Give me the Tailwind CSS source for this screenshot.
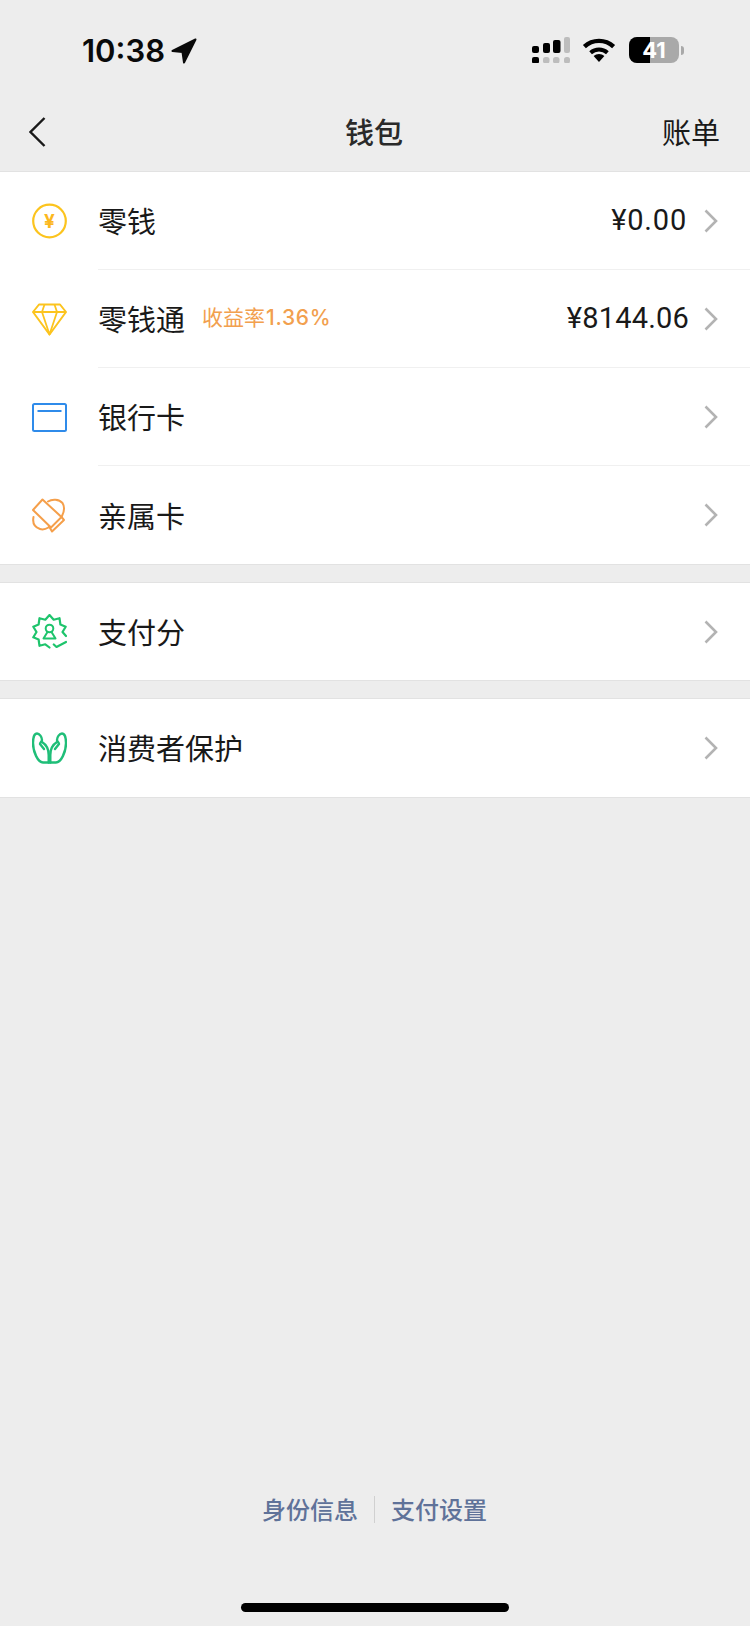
<!DOCTYPE html>
<html lang="zh-CN">
  <head>
    <meta charset="UTF-8" />
    <meta name="viewport" content="width=device-width, initial-scale=1.0" />
    <script src="https://cdn.jsdelivr.net/npm/@tailwindcss/browser@4"></script>
    <title>钱包</title>
  </head>
  <body class="bg-[#ededed] font-['Noto_Sans_CJK_SC',sans-serif] text-[#191919]">
    <div class="flex flex-col h-[1626px] w-[750px] overflow-hidden">
      <!-- Status bar -->
      <div class="flex items-start justify-between h-[90px] pt-[37px] pl-[82px] pr-[66px] shrink-0">
        <div class="flex items-center gap-[6px] h-[26px]">
          <span class="font-['Inter',sans-serif] font-semibold text-[31px] leading-none text-[#0a0a0a]">10:38</span>
          <svg width="26" height="26" viewBox="0 0 26 26" class="mt-[2px]"><path d="M24.500 1.500 1.500 13l10 1L13 24.500z" fill="#0a0a0a" stroke="#0a0a0a" stroke-width="2" stroke-linejoin="round"/></svg>
        </div>
        <div class="flex items-center">
          <svg width="38" height="26" viewBox="0 0 38 26" class="mr-[12px]">
            <rect x="0" y="9" width="7" height="7" rx="2" fill="#000"/>
            <rect x="11" y="6" width="7" height="10" rx="2" fill="#000"/>
            <rect x="21" y="3" width="7.500" height="13" rx="2" fill="#000"/>
            <rect x="32" y="0" width="6" height="16" rx="2" fill="#bdbdbd"/>
            <rect x="0" y="20" width="7" height="6.500" rx="2" fill="#000"/>
            <rect x="11" y="20" width="6.500" height="6.500" rx="2.500" fill="#bdbdbd"/>
            <rect x="21" y="20" width="6.500" height="6.500" rx="2.500" fill="#bdbdbd"/>
            <rect x="32" y="20" width="6" height="6.500" rx="2.500" fill="#bdbdbd"/>
          </svg>
          <svg width="34" height="24" viewBox="0 0 34 24" class="mr-[13px]">
            <path d="M17 24 11.600 18a8 8 0 0 1 10.800 0z" fill="#000"/>
            <path d="M8.600 14.800a12.600 12.600 0 0 1 16.800 0" fill="none" stroke="#000" stroke-width="4"/>
            <path d="M2.400 8.600a21.400 21.400 0 0 1 29.200 0" fill="none" stroke="#000" stroke-width="4.400"/>
          </svg>
          <div class="relative flex w-[50px] h-[26px] rounded-[8px] overflow-hidden bg-[#a9a9a9]">
            <div class="w-[21px] h-full bg-black"></div>
            <span class="absolute inset-0 flex items-center justify-center font-['Inter',sans-serif] font-bold text-[22px] leading-none text-white">41</span>
          </div>
          <div class="w-[3px] h-[9px] ml-[2px] rounded-r-full bg-[#a9a9a9]"></div>
        </div>
      </div>

      <!-- Nav -->
      <div class="relative flex items-center justify-between h-[81px] pt-[2px] pl-[29px] pr-[30px] shrink-0">
        <svg width="17" height="30" viewBox="0 0 17 30"><path d="M15.500 1 1.500 15l14 14" fill="none" stroke="#191919" stroke-width="2.400"/></svg>
        <span class="absolute left-0 right-[2px] text-center text-[29px] font-medium leading-none text-[#2a2a2a]">钱包</span>
        <span class="text-[29px] leading-none">账单</span>
      </div>

      <!-- Wallet rows -->
      <div class="bg-white border-y border-[#e2e2e2] shrink-0">
        <div class="flex items-center h-[98px] pl-[32px]">
          <svg width="35" height="36" viewBox="0 0 35 36" class="shrink-0 mr-[31px]">
            <circle cx="17.500" cy="18" r="16.300" fill="none" stroke="#fcc41e" stroke-width="2.200"/>
            <text x="17.500" y="24.500" text-anchor="middle" font-size="19" font-weight="700" fill="#fcb81e" font-family="Inter">¥</text>
          </svg>
          <div class="flex items-center flex-1 h-full border-b border-[#f0f0f0] pr-[32px]">
            <span class="text-[29px] leading-none">零钱</span>
            <span class="ml-auto mr-[17px] font-['Roboto',sans-serif] text-[29px] leading-none tracking-[0.8px]">¥0.00</span>
            <svg width="14" height="24" viewBox="0 0 14 24"><path d="M1.500 1.500 12 12 1.500 22.500" fill="none" stroke="#b3b3b3" stroke-width="2.600"/></svg>
          </div>
        </div>
        <div class="flex items-center h-[98px] pl-[32px]">
          <svg width="35" height="33" viewBox="0 0 35 33" class="shrink-0 mr-[31px]">
            <path d="M7 1.500h21L34 9 17.500 31.500 1 9z" fill="none" stroke="#fcc41e" stroke-width="2" stroke-linejoin="round"/>
            <path d="M1 9h33M12.500 1.500 10 9l7.500 22.500L25 9l-2.500-7.500" fill="none" stroke="#fcc41e" stroke-width="1.800" stroke-linejoin="round"/>
          </svg>
          <div class="flex items-center flex-1 h-full border-b border-[#f0f0f0] pr-[32px]">
            <span class="text-[29px] leading-none">零钱通</span>
            <span class="ml-[17px] mb-[3px] text-[21px] leading-none text-[#f2a04e]">收益率<span class="ml-[1px] font-['Inter',sans-serif] font-medium tracking-[0.7px]">1.36%</span></span>
            <span class="ml-auto mr-[15px] font-['Roboto',sans-serif] text-[29px] leading-none tracking-[0.2px]">¥8144.06</span>
            <svg width="14" height="24" viewBox="0 0 14 24"><path d="M1.500 1.500 12 12 1.500 22.500" fill="none" stroke="#b3b3b3" stroke-width="2.600"/></svg>
          </div>
        </div>
        <div class="flex items-center h-[98px] pl-[32px]">
          <svg width="35" height="29" viewBox="0 0 35 29" class="shrink-0 mr-[31px]">
            <rect x="1" y="1" width="33" height="27" rx="1.500" fill="none" stroke="#2f8bea" stroke-width="2"/>
            <path d="M5.500 8h24" stroke="#2f8bea" stroke-width="2"/>
          </svg>
          <div class="flex items-center flex-1 h-full border-b border-[#f0f0f0] pr-[32px]">
            <span class="text-[29px] leading-none">银行卡</span>
            <svg width="14" height="24" viewBox="0 0 14 24" class="ml-auto"><path d="M1.500 1.500 12 12 1.500 22.500" fill="none" stroke="#b3b3b3" stroke-width="2.600"/></svg>
          </div>
        </div>
        <div class="flex items-center h-[98px] pl-[32px]">
          <svg width="35" height="35" viewBox="0 0 35 35" class="shrink-0 mr-[31px]">
            <path d="M10.500 1.500 1 12l18 17.500L29.500 19z" fill="none" stroke="#f59f4a" stroke-width="2" stroke-linejoin="round"/>
            <path d="M29.500 19l2.500 3-12 11.500-3.500-6" fill="none" stroke="#f59f4a" stroke-width="2" stroke-linejoin="round"/>
            <path d="M16 3.500C20 .8 27 1 30.500 5c2.500 4 1.500 9-.5 13M1.500 19C.5 24 2 29 8 31c3 1 6 0 8.500-1.500" fill="none" stroke="#f59f4a" stroke-width="2" stroke-linecap="round"/>
          </svg>
          <div class="flex items-center flex-1 h-full pr-[32px]">
            <span class="text-[29px] leading-none">亲属卡</span>
            <svg width="14" height="24" viewBox="0 0 14 24" class="ml-auto"><path d="M1.500 1.500 12 12 1.500 22.500" fill="none" stroke="#b3b3b3" stroke-width="2.600"/></svg>
          </div>
        </div>
      </div>

      <div class="bg-white border-y border-[#e2e2e2] mt-[17px] shrink-0">
        <div class="flex items-center h-[97px] pl-[32px]">
          <svg width="35" height="36" viewBox="-17.500 -18 35 36" class="shrink-0 mr-[31px]">
            <path d="M16.500 4 13 0 16.200 -5.300 10.900 -7.500 10 -13.800 4.200 -12.300 0 -17 -4.200 -12.300 -10 -13.800 -10.900 -7.500 -16.200 -5.300 -13 0 -16.200 5.300 -10.900 7.500 -10 13.800 -4.200 12.300 0 15.500" fill="none" stroke="#1ec46c" stroke-width="2.200" stroke-linejoin="round" stroke-linecap="round"/>
            <path d="M4.300 12.500 7 15 16.500 10" fill="none" stroke="#1ec46c" stroke-width="2.200" stroke-linecap="round" stroke-linejoin="round"/>
            <circle cx="0" cy="-3.500" r="3.800" fill="none" stroke="#1ec46c" stroke-width="2"/>
            <path d="M-2 0-6 6.500H6L2 0" fill="none" stroke="#1ec46c" stroke-width="2" stroke-linejoin="round"/>
          </svg>
          <div class="flex items-center flex-1 h-full pr-[32px]">
            <span class="text-[29px] leading-none">支付分</span>
            <svg width="14" height="24" viewBox="0 0 14 24" class="ml-auto"><path d="M1.500 1.500 12 12 1.500 22.500" fill="none" stroke="#b3b3b3" stroke-width="2.600"/></svg>
          </div>
        </div>
      </div>

      <div class="bg-white border-y border-[#e2e2e2] mt-[17px] shrink-0">
        <div class="flex items-center h-[98px] pb-[1px] pl-[32px]">
          <svg width="35" height="32" viewBox="0 0 35 32" class="shrink-0 mr-[31px]">
            <g>
              <path d="M16.700 30.500H11C6 30.500 1 20 1 11 1 5 2.500 1.500 5 1.500 7.500 1.500 10 5 10 8 10 9.500 8 10.500 8 12L12 17" fill="none" stroke="#1fbe78" stroke-width="2.400" stroke-linecap="round" stroke-linejoin="round"/>
              <path d="M10 10C14 12.500 16.700 17 16.700 23V30.500" fill="none" stroke="#1fbe78" stroke-width="2.400" stroke-linecap="round" stroke-linejoin="round"/>
            </g>
            <g transform="matrix(-1 0 0 1 35 0)">
              <path d="M16.700 30.500H11C6 30.500 1 20 1 11 1 5 2.500 1.500 5 1.500 7.500 1.500 10 5 10 8 10 9.500 8 10.500 8 12L12 17" fill="none" stroke="#1fbe78" stroke-width="2.400" stroke-linecap="round" stroke-linejoin="round"/>
              <path d="M10 10C14 12.500 16.700 17 16.700 23V30.500" fill="none" stroke="#1fbe78" stroke-width="2.400" stroke-linecap="round" stroke-linejoin="round"/>
            </g>
          </svg>
          <div class="flex items-center flex-1 h-full pr-[32px]">
            <span class="text-[29px] leading-none">消费者保护</span>
            <svg width="14" height="24" viewBox="0 0 14 24" class="ml-auto"><path d="M1.500 1.500 12 12 1.500 22.500" fill="none" stroke="#b3b3b3" stroke-width="2.600"/></svg>
          </div>
        </div>
      </div>

      <!-- Footer -->
      <div class="flex-1"></div>
      <div class="flex items-center justify-center h-[28px] shrink-0 pr-[1px] text-[24px] font-medium leading-none text-[#5f7299]">
        <span>身份信息</span>
        <div class="w-px h-[27px] bg-[#d0d0d0] mx-[16px]"></div>
        <span>支付设置</span>
      </div>
      <div class="flex justify-center pt-[80px] pb-[14px] shrink-0">
        <div class="w-[268px] h-[9px] rounded-full bg-black"></div>
      </div>
    </div>
  </body>
</html>
